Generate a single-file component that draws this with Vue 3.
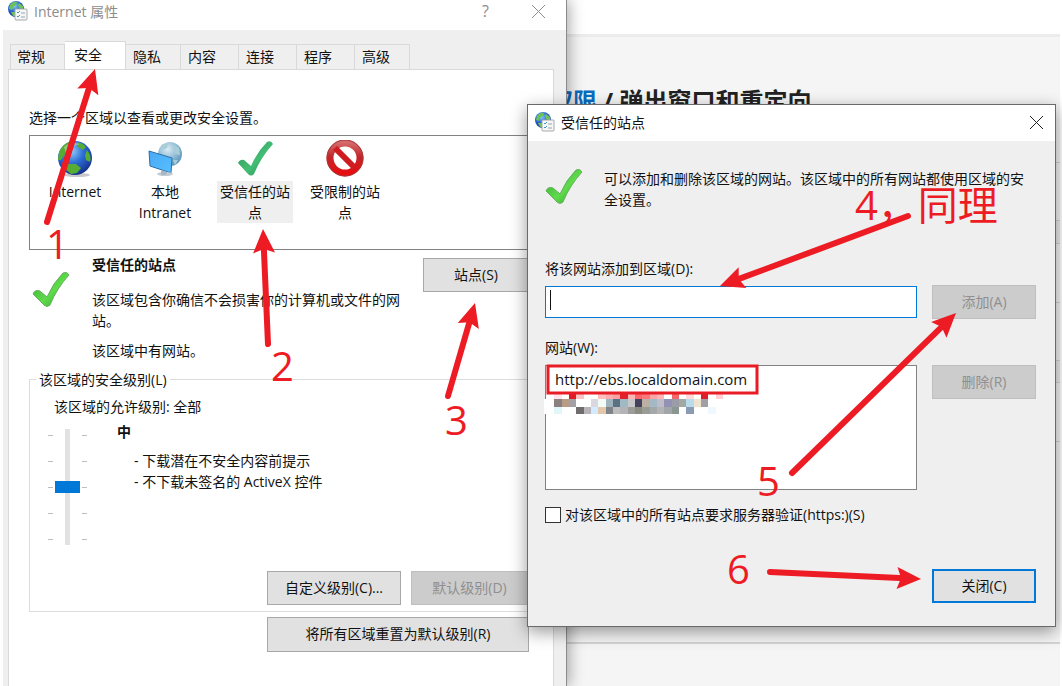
<script setup>
import { ref } from 'vue'

const tabs = ['常规', '安全', '隐私', '内容', '连接', '程序', '高级']
const activeTab = ref('安全')
const zones = [
  { icon: 'globe', label: 'Internet' },
  { icon: 'intranet', label: '本地 Intranet' },
  { icon: 'check', label: '受信任的站点' },
  { icon: 'blocked', label: '受限制的站点' },
]
const activeZone = ref('受信任的站点')
const level = ref(50)
const site = ref('')
const requireHttps = ref(false)

const arrows = [
  { from: [47, 222], to: [95, 69] },
  { from: [268, 344], to: [263, 229] },
  { from: [448, 396], to: [475, 303] },
  { from: [908, 216], to: [720, 286] },
  { from: [792, 473], to: [956, 313] },
  { from: [770, 572], to: [921, 579] },
].map(({ from, to }) => {
  const dx = to[0] - from[0]
  const dy = to[1] - from[1]
  const len = Math.hypot(dx, dy)
  return {
    from,
    to,
    end: [to[0] - (dx / len) * 16, to[1] - (dy / len) * 16],
    angle: (Math.atan2(dy, dx) * 180) / Math.PI,
  }
})
const notes = [
  { x: 46, y: 259, text: '1' },
  { x: 271, y: 381, text: '2' },
  { x: 445, y: 435, text: '3' },
  { x: 855, y: 220, text: '4，同理' },
  { x: 757, y: 496, text: '5' },
  { x: 727, y: 584, text: '6' },
]

const mosaicRows = [
  { y: 394, h: 5, cells: { 1: '#ffe6e8', 3: '#e01b22', 4: '#fbc4c4', 7: '#fcc0c0', 8: '#fbaeb0', 9: '#f9a0a4', 10: '#e0202a', 11: '#fcb4b4', 12: '#f8686c', 13: '#f8787c', 14: '#fba4a6', 15: '#fcb4b4', 17: '#f4686c', 19: '#ffd8da', 21: '#dc2028', 23: '#ffd0d4' } },
  { y: 399, h: 8, cells: { 1: '#8a8080', 2: '#b89c86', 3: '#a2a2a6', 6: '#d9d8de', 7: '#f2fbf6', 8: '#9fb3bd', 9: '#5b7082', 10: '#a0bac4', 11: '#c8c8ca', 12: '#46425c', 13: '#bcafa4', 14: '#a2bac6', 15: '#c0bcc8', 16: '#9292b4', 17: '#9a9ca8', 18: '#a2a8a2', 19: '#b8dcec', 20: '#efe3d0', 21: '#a0a0a4' } },
  { y: 407, h: 7, cells: { 1: '#e0f7fa', 4: '#716c6e', 5: '#b8b4ba', 6: '#d2ebff', 7: '#e3c7ad', 8: '#808488', 9: '#bdbdbd', 10: '#b4b4b8', 11: '#9c9c9a', 12: '#8a8c82', 13: '#9a9c96', 14: '#a5a8aa', 15: '#b4b4b4', 16: '#a2a6a8', 17: '#8c9690', 19: '#8b9bb4', 22: '#f0f8ff' } },
]
const mosaic = mosaicRows.flatMap(({ y, h, cells }) =>
  Object.entries(cells).map(([col, fill]) => {
    const x = Math.round(547 + (Number(col) * 22) / 3)
    return { x, y, h, w: Math.round(547 + ((Number(col) + 1) * 22) / 3) - x, fill }
  })
)
</script>

<template>
  <div class="desktop">
    <svg class="defs" width="0" height="0" aria-hidden="true">
      <defs>
        <radialGradient id="sea" cx="40%" cy="30%" r="75%">
          <stop offset="0" stop-color="#8fd0f8" />
          <stop offset="0.45" stop-color="#2f6fd8" />
          <stop offset="1" stop-color="#122a86" />
        </radialGradient>
        <radialGradient id="paleSea" cx="40%" cy="30%" r="75%">
          <stop offset="0" stop-color="#d8edf6" />
          <stop offset="1" stop-color="#5590b6" />
        </radialGradient>
        <linearGradient id="screen" x1="0" y1="0" x2="1" y2="1">
          <stop offset="0" stop-color="#4ba8f6" />
          <stop offset="1" stop-color="#55c0ff" />
        </linearGradient>
        <linearGradient id="tick" x1="0" y1="0" x2="1" y2="1">
          <stop offset="0" stop-color="#35a52f" />
          <stop offset="0.55" stop-color="#5fdb4b" />
          <stop offset="1" stop-color="#2f9d2a" />
        </linearGradient>
        <linearGradient id="tickDim" x1="0" y1="0" x2="1" y2="1">
          <stop offset="0" stop-color="#2c8f57" />
          <stop offset="0.55" stop-color="#43bd74" />
          <stop offset="1" stop-color="#2b8b52" />
        </linearGradient>
        <linearGradient id="ban" x1="0" y1="0" x2="0" y2="1">
          <stop offset="0" stop-color="#d4686a" />
          <stop offset="0.45" stop-color="#c2272b" />
          <stop offset="1" stop-color="#e60d10" />
        </linearGradient>
        <symbol id="siteIcon" viewBox="0 0 20 20">
          <circle cx="8" cy="8" r="8" fill="url(#sea)" />
          <path d="M2 4Q5 0 9 1L8 4L5 6L4 9L1 8ZM11 2L15 5L15 9L11 7L10 4ZM3 11L7 11L8 15L5 15Z" fill="#6cc255" />
          <rect x="7" y="8" width="12" height="11" rx="1" fill="#f6f6f6" stroke="#a5a9ac" />
          <path d="M9 11L10 12L12 10M9 15L10 16L12 14" fill="none" stroke="#3b98c8" />
          <path d="M13 12H17M13 16H17" stroke="#9aa4aa" />
        </symbol>
      </defs>
    </svg>

    <section class="page">
      <div class="page-bar"></div>
      <h1 class="page-title"><a href="#">权限</a> / 弹出窗口和重定向</h1>
      <div class="rows">
        <div class="row r1"></div>
        <div class="row r2"></div>
        <div class="row r3"></div>
        <div class="row r4"></div>
        <div class="row r5"></div>
        <div class="row r6"></div>
        <div class="row r7"></div>
        <div class="row r8"></div>
      </div>
    </section>

    <section class="window props" aria-label="Internet 属性">
      <header class="titlebar">
        <svg class="app-icon" width="20" height="20"><use href="#siteIcon" /></svg>
        <span class="title">Internet 属性</span>
        <button class="cap" aria-label="帮助">?</button>
        <button class="cap" aria-label="关闭">
          <svg width="13" height="13" viewBox="0 0 13 13"><path d="M0 0L13 13M13 0L0 13" stroke="#8c8c8c" fill="none" /></svg>
        </button>
      </header>
      <div class="props-body">
        <nav class="tabs">
          <button v-for="t in tabs" :key="t" class="tab" :class="{ on: t === activeTab }" @click="activeTab = t">{{ t }}</button>
        </nav>
        <div class="pane">
          <p>选择一个区域以查看或更改安全设置。</p>
          <div class="zones">
            <button v-for="z in zones" :key="z.label" class="zone" :class="{ on: z.label === activeZone }" @click="activeZone = z.label">
              <svg v-if="z.icon === 'globe'" width="38" height="38" viewBox="0 0 38 38">
                <ellipse cx="21" cy="35" rx="13" ry="2" fill="#c8c8c8" />
                <circle cx="19" cy="18" r="17" fill="url(#sea)" />
                <path d="M3 12Q7 3 16 1L19 4L15 8L13 13L8 15L5 20L2 20ZM21 2Q27 3 30 7L27 10L22 7ZM31 10Q36 16 34 22L30 20L29 15ZM12 24L20 24L25 28L21 33L15 34L9 29Z" fill="#55ad34" />
                <path d="M8 7Q15 1 24 4Q16 6 10 13Z" fill="#fff" opacity="0.35" />
              </svg>
              <svg v-else-if="z.icon === 'intranet'" width="38" height="38" viewBox="0 0 38 38">
                <circle cx="24" cy="14" r="12" fill="url(#paleSea)" />
                <path d="M15 5L22 3L21 8L16 10ZM26 4L33 8L34 15L29 14L27 9ZM27 20L32 20L29 25Z" fill="#a9ccd9" />
                <path d="M3 11L26 18L25 33L4 26Z" fill="url(#screen)" stroke="#2b6fa8" />
                <ellipse cx="19" cy="34" rx="8" ry="2" fill="#c3cdd3" />
                <path d="M15 30L21 32L20 35H15Z" fill="#aab8c2" />
              </svg>
              <svg v-else-if="z.icon === 'check'" width="38" height="38" viewBox="0 0 38 38">
                <path d="M2 23Q4 19 8 20L15 26Q21 12 31 2Q35 0 37 4Q25 17 18 34Q15 37 12 34Z" fill="url(#tickDim)" />
              </svg>
              <svg v-else width="38" height="38" viewBox="0 0 38 38">
                <circle cx="19" cy="18" r="15" fill="none" stroke="url(#ban)" stroke-width="7" />
                <circle cx="19" cy="18" r="18" fill="none" stroke="#a43a3c" />
                <path d="M9 8L29 28" stroke="#cf1c20" stroke-width="6" />
              </svg>
              <span class="zone-label">{{ z.label }}</span>
            </button>
          </div>

          <div class="detail">
            <svg class="detail-icon" width="38" height="38" viewBox="0 0 38 38">
              <path d="M1 23Q3 18 8 20L15 26Q21 12 31 2Q35 0 37 4Q25 17 18 34Q15 37 12 34Z" fill="url(#tick)" stroke="#68b060" />
            </svg>
            <div class="detail-text">
              <strong>受信任的站点</strong>
              <p class="about">该区域包含你确信不会损害你的计算机或文件的网站。</p>
              <p>该区域中有网站。</p>
            </div>
            <button class="btn sites">站点(S)</button>
          </div>

          <fieldset class="group">
            <legend>该区域的安全级别(L)</legend>
            <p class="allowed">该区域的允许级别: 全部</p>
            <div class="level">
              <div class="slider">
                <div class="marks"><i v-for="n in 5" :key="n"></i></div>
                <input v-model="level" type="range" min="0" max="100" aria-label="该区域的安全级别" />
                <div class="marks"><i v-for="n in 5" :key="n"></i></div>
              </div>
              <div class="level-text">
                <strong>中</strong>
                <p class="policy">- 下载潜在不安全内容前提示<br />- 不下载未签名的 ActiveX 控件</p>
              </div>
            </div>
            <div class="actions">
              <button class="btn custom">自定义级别(C)...</button>
              <button class="btn default" disabled>默认级别(D)</button>
            </div>
          </fieldset>
          <button class="btn reset">将所有区域重置为默认级别(R)</button>
        </div>
      </div>
    </section>

    <section class="window dialog" role="dialog" aria-label="受信任的站点">
      <header class="titlebar">
        <svg class="app-icon" width="20" height="20"><use href="#siteIcon" /></svg>
        <span class="title">受信任的站点</span>
        <button class="cap" aria-label="关闭">
          <svg width="13" height="13" viewBox="0 0 13 13"><path d="M0 0L13 13M13 0L0 13" stroke="#222" fill="none" /></svg>
        </button>
      </header>
      <div class="dialog-body">
        <div class="intro">
          <svg width="38" height="38" viewBox="0 0 38 38">
            <path d="M1 23Q3 18 8 20L15 26Q21 12 31 2Q35 0 37 4Q25 17 18 34Q15 37 12 34Z" fill="url(#tick)" stroke="#68b060" />
          </svg>
          <p>可以添加和删除该区域的网站。该区域中的所有网站都使用区域的安全设置。</p>
        </div>
        <label for="site">将该网站添加到区域(D):</label>
        <div class="line">
          <div class="field">
            <input id="site" v-model="site" type="text" />
            <span class="caret"></span>
          </div>
          <button class="btn" disabled>添加(A)</button>
        </div>
        <div id="sites-label" class="sites-label">网站(W):</div>
        <div class="line">
          <ul class="list" aria-labelledby="sites-label">
            <li>http://ebs.localdomain.com</li>
          </ul>
          <button class="btn" disabled>删除(R)</button>
        </div>
        <div class="https">
          <input id="https" v-model="requireHttps" type="checkbox" />
          <label for="https">对该区域中的所有站点要求服务器验证(https:)(S)</label>
        </div>
        <div class="foot"><button class="btn primary">关闭(C)</button></div>
      </div>
    </section>

    <svg class="ink" width="1062" height="686" viewBox="0 0 1062 686">
      <rect x="544" y="399" width="4" height="15" fill="#fff" />
      <rect v-for="(c, i) in mosaic" :key="'m' + i" :x="c.x" :y="c.y" :width="c.w" :height="c.h" :fill="c.fill" />
      <rect x="548" y="366" width="209" height="27" fill="none" stroke="#e81c24" stroke-width="3" />
      <g v-for="(a, i) in arrows" :key="'a' + i" fill="#ed1c24">
        <line :x1="a.from[0]" :y1="a.from[1]" :x2="a.end[0]" :y2="a.end[1]" stroke="#ed1c24" stroke-width="6" stroke-linecap="round" />
        <path d="M0 0L-24 -11L-20 0L-24 11Z" :transform="`translate(${a.to[0]} ${a.to[1]}) rotate(${a.angle})`" />
      </g>
      <text v-for="n in notes" :key="n.text" :x="n.x" :y="n.y">{{ n.text }}</text>
    </svg>
  </div>
</template>

<style>
body {
  margin: 0;
  background: #fff;
}
</style>

<style scoped>
.desktop {
  position: relative;
  min-height: 100vh;
  overflow: hidden;
  font: 14px/21px "Open Sans", "Noto Sans CJK SC", sans-serif;
  color: #111;
}
.desktop * {
  box-sizing: border-box;
}
.defs {
  position: absolute;
}
p {
  margin: 0;
}
button,
input {
  font: inherit;
  color: inherit;
}
button {
  padding: 0;
  border: 0;
  background: none;
}

/* page behind the windows */
.page {
  min-height: 100vh;
  margin-right: 2px;
  background: #f5f5f5;
}
.page-bar {
  height: 37px;
  background: #fff;
  border-bottom: 3px solid #ececec;
}
.page-title {
  margin: 0;
  padding: 46px 0 0 549px;
  font-size: 24px;
  line-height: 36px;
  font-weight: 700;
  color: #222;
}
.page-title a {
  color: #0b6cc0;
  text-decoration: none;
}
.rows {
  padding-top: 43px;
}
.row {
  border-top: 1px solid #d4d4d4;
}
.r1 { height: 58px; }
.r2 { height: 23px; background: #ececec; }
.r3 { height: 59px; }
.r4 { height: 58px; }
.r5 { height: 22px; background: #ececec; }
.r6 { height: 59px; }
.r7 { height: 201px; }
.r8 { border-top: 2px solid #d4d4d4; }

/* windows */
.window {
  position: absolute;
  display: flex;
  flex-direction: column;
}
.titlebar {
  display: flex;
  align-items: center;
  background: #fff;
}
.title {
  flex: 1;
  padding-left: 6px;
}
.cap {
  display: flex;
  align-items: center;
  justify-content: center;
  width: 53px;
  height: 24px;
  font-size: 16px;
}
.btn {
  height: 34px;
  padding-bottom: 2px;
  border: 1px solid #a8a8a8;
  background: #e1e1e1;
}
.btn:disabled {
  border-color: #bfbfbf;
  background: #ccc;
  color: #8f8f8f;
}
.btn.primary {
  border: 2px solid #0078d7;
}

.props {
  top: 0;
  bottom: 0;
  left: 0;
  width: 567px;
  padding-left: 3px;
  background: #fff;
  border-right: 1px solid #8a8a8a;
  box-shadow: 2px 0 14px rgba(0, 0, 0, 0.35);
}
.props .titlebar {
  height: 30px;
  padding: 0 1px 8px 5px;
  color: #8c8c8c;
}
.props-body {
  flex: 1;
  display: flex;
  flex-direction: column;
  min-height: 0;
  padding: 11px 12px 0 5px;
  background: #efefef;
}
.tabs {
  display: flex;
  align-items: flex-end;
  height: 29px;
  padding-left: 2px;
  margin-bottom: -1px;
}
.tab {
  width: 58px;
  height: 26px;
  padding: 0 13px 2px 7px;
  border: 1px solid #d9d9d9;
  border-left-width: 0;
  text-align: left;
}
.tab:first-child {
  width: 55px;
  padding-left: 6px;
  border-left-width: 1px;
}
.tab.on {
  width: 61px;
  height: 29px;
  padding: 0 8px 3px 9px;
  border-bottom: 0;
  background: #fff;
}
.tab.on + .tab {
  width: 55px;
}
.tab:last-child {
  width: 55px;
}
.pane {
  flex: 1;
  padding: 37px 24px 0 20px;
  border: 1px solid #d9d9d9;
  border-bottom: 0;
  background: #fff;
}
.zones {
  display: flex;
  align-items: flex-start;
  gap: 14px;
  height: 115px;
  margin-top: 7px;
  padding: 4px 7px;
  border: 1px solid #828282;
}
.zone {
  display: flex;
  flex-direction: column;
  align-items: center;
  width: 76px;
}
.zone-label {
  width: 76px;
  margin-top: 3px;
  padding: 0 1px;
}
.zone.on .zone-label {
  background: #efefef;
}
.detail {
  display: grid;
  grid-template-columns: 63px 1fr 106px;
  column-gap: 0;
  padding-top: 4px;
}
.detail-icon {
  margin: 17px 0 0 3px;
}
.detail-text {
  padding-right: 12px;
}
.about {
  margin: 14px 0 9px;
}
.sites {
  margin-top: 4px;
}
.group {
  margin: 8px 0 0;
  padding: 6px 0 6px 0;
  border: 1px solid #dcdcdc;
}
.group legend {
  margin-left: 6px;
  padding: 0 3px;
}
.allowed {
  padding-left: 24px;
}
.level {
  display: flex;
  gap: 25px;
  height: 154px;
  padding: 4px 0 0 18px;
}
.slider {
  display: flex;
  align-items: flex-start;
  padding-top: 8px;
}
.marks {
  display: flex;
  flex-direction: column;
  justify-content: space-between;
  width: 5px;
  height: 105px;
  margin-top: 6px;
}
.marks i {
  height: 1px;
  background: #bdbdbd;
}
.slider input {
  appearance: none;
  writing-mode: vertical-lr;
  width: 25px;
  height: 116px;
  margin: 0 2px;
  background: linear-gradient(#e2e2e2, #e2e2e2) center / 5px 100% no-repeat;
}
.slider input::-webkit-slider-thumb {
  appearance: none;
  width: 25px;
  height: 12px;
  background: #0078d7;
}
.level-text {
  padding-left: 5px;
}
.policy {
  padding: 8px 0 0 17px;
}
.actions {
  display: flex;
  justify-content: flex-end;
  gap: 10px;
}
.custom {
  width: 134px;
}
.default {
  width: 117px;
}
.reset {
  display: block;
  width: 262px;
  height: 35px;
  margin: 5px 0 0 auto;
}

.dialog {
  top: 104px;
  left: 527px;
  width: 529px;
  border: 1px solid #6a6a6a;
  background: #efefef;
  box-shadow: 0 5px 16px rgba(0, 0, 0, 0.4);
}
.dialog .titlebar {
  height: 36px;
  padding: 0 1px 2px 7px;
}
.dialog .cap {
  width: 36px;
}
.dialog-body {
  padding: 27px 19px 23px 17px;
}
.intro {
  display: flex;
  gap: 21px;
  height: 90px;
}
.intro p {
  flex: 1;
  padding-right: 4px;
}
.dialog-body label,
.sites-label {
  display: block;
}
.line {
  display: flex;
  align-items: flex-start;
  gap: 15px;
  padding-top: 6px;
}
.line .btn,
.primary {
  width: 104px;
}
.field {
  position: relative;
  flex: 1;
  padding-top: 1px;
}
.field input {
  display: block;
  width: 100%;
  height: 32px;
  padding: 0 6px;
  border: 1px solid #0078d7;
  outline: 0;
  background: #fff;
}
.caret {
  position: absolute;
  top: 5px;
  left: 5px;
  width: 1px;
  height: 20px;
  background: #111;
}
.sites-label {
  margin-top: 18px;
}
.sites-label + .line {
  padding-top: 7px;
}
.list {
  flex: 1;
  height: 125px;
  margin: 0;
  padding: 3px 9px;
  border: 1px solid #828282;
  background: #fff;
  font-size: 15px;
  list-style: none;
}
.https {
  display: flex;
  align-items: center;
  gap: 4px;
  padding-top: 14px;
}
.https input {
  appearance: none;
  width: 16px;
  height: 16px;
  margin: 0;
  border: 1px solid #333;
  background: #fff;
}
.foot {
  display: flex;
  justify-content: flex-end;
  padding-top: 44px;
}

/* hand-drawn notes lying over both windows */
.ink {
  position: absolute;
  top: 0;
  left: 0;
  pointer-events: none;
}
.ink text {
  font-size: 40px;
  fill: #ed1c24;
}
</style>
